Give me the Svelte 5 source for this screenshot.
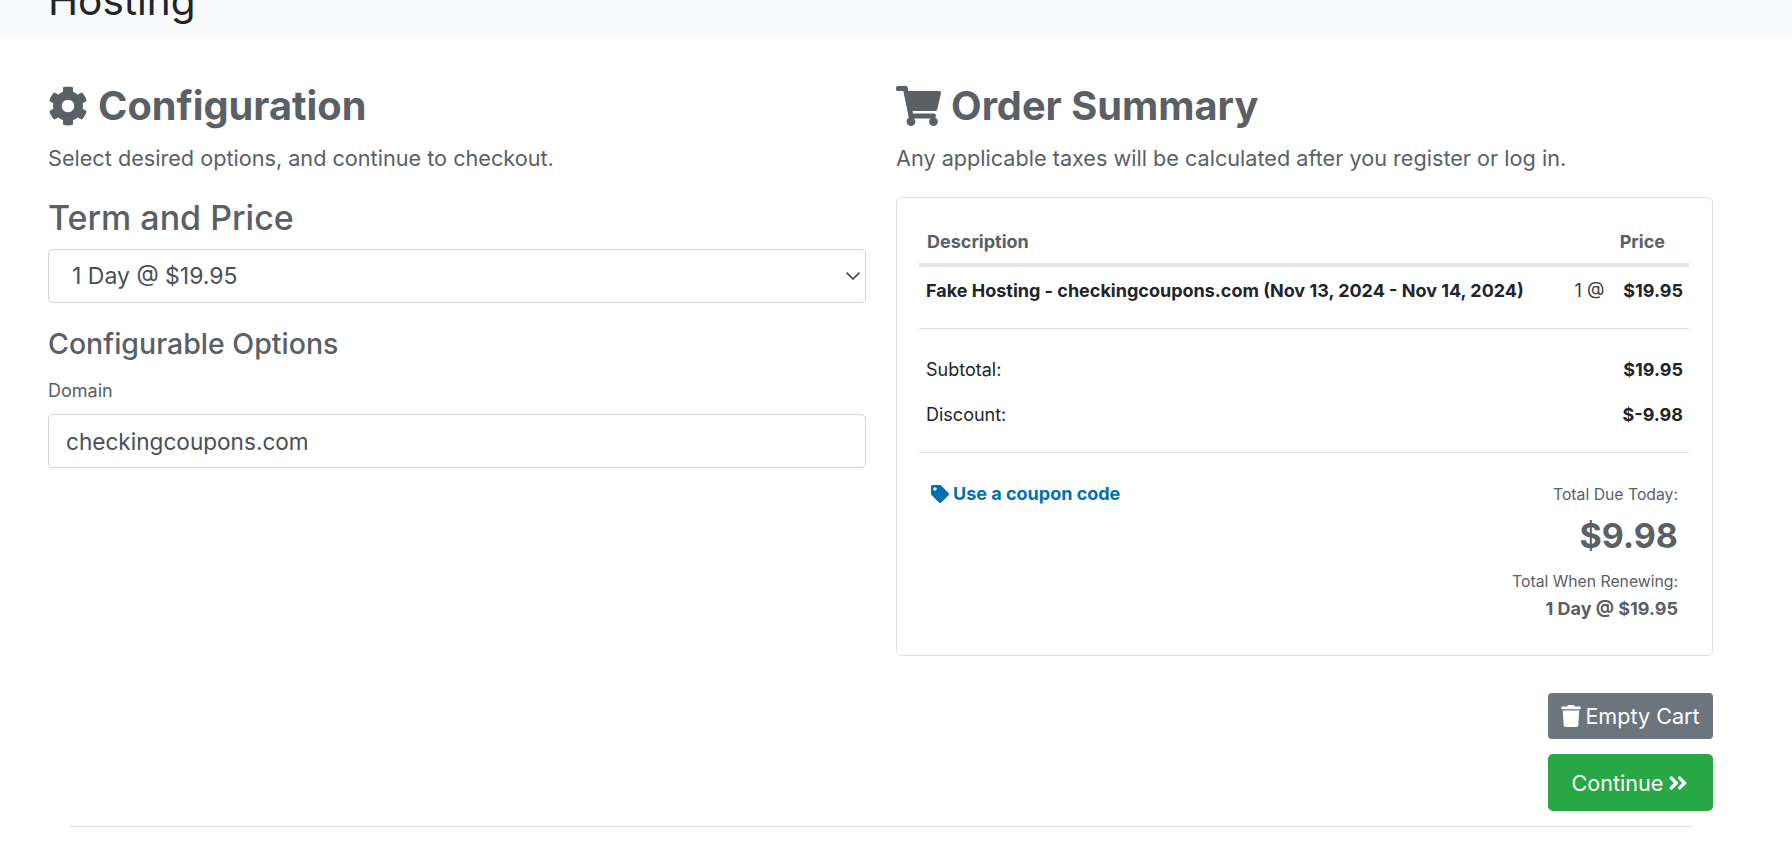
<script lang="ts">
  let term = $state('1 Day @ $19.95');
  let domain = $state('checkingcoupons.com');
</script>

<header class="band">
  <h1>Hosting</h1>
</header>

<main class="page">
  <section class="config">
    <h2>
      <svg class="ico gear" viewBox="0 0 512 512" aria-hidden="true"><path d="M487.4 315.7l-42.6-24.6c4.3-23.2 4.3-47 0-70.2l42.6-24.6c4.9-2.8 7.1-8.6 5.5-14-11.1-35.6-30-67.8-54.7-94.6-3.8-4.1-10-5.1-14.8-2.3L380.8 110c-17.9-15.4-38.5-27.3-60.8-35.1V25.8c0-5.6-3.9-10.5-9.4-11.7-36.7-8.2-74.3-7.8-109.2 0-5.5 1.2-9.4 6.1-9.4 11.7V75c-22.2 7.9-42.8 19.8-60.8 35.1L88.7 85.5c-4.9-2.8-11-1.9-14.8 2.3-24.7 26.7-43.6 58.9-54.7 94.6-1.7 5.4.6 11.2 5.5 14L67.3 221c-4.3 23.2-4.3 47 0 70.2l-42.6 24.6c-4.9 2.8-7.1 8.6-5.5 14 11.1 35.6 30 67.8 54.7 94.6 3.8 4.1 10 5.1 14.8 2.3l42.6-24.6c17.9 15.4 38.5 27.3 60.8 35.1v49.2c0 5.6 3.9 10.5 9.4 11.7 36.7 8.2 74.3 7.8 109.2 0 5.5-1.2 9.4-6.1 9.4-11.7v-49.2c22.2-7.9 42.8-19.8 60.8-35.1l42.6 24.6c4.9 2.8 11 1.9 14.8-2.3 24.7-26.7 43.6-58.9 54.7-94.6 1.5-5.5-.7-11.3-5.6-14.1zM256 336c-44.1 0-80-35.9-80-80s35.9-80 80-80 80 35.9 80 80-35.9 80-80 80z"/></svg>
      Configuration
    </h2>
    <p class="lead">Select desired options, and continue to checkout.</p>
    <h3>Term and Price</h3>
    <div class="select-wrap">
      <select bind:value={term}>
        <option>1 Day @ $19.95</option>
      </select>
      <svg class="chev" viewBox="0 0 16 16" aria-hidden="true"><path fill="none" stroke="#343a40" stroke-linecap="round" stroke-linejoin="round" stroke-width="1.6" d="M2 5l6 6 6-6"/></svg>
    </div>
    <h4>Configurable Options</h4>
    <label for="domain">Domain</label>
    <input id="domain" type="text" bind:value={domain} />
  </section>

  <section class="summary">
    <h2>
      <svg class="ico cart" viewBox="0 0 576 512" aria-hidden="true"><path d="M528.12 301.319l47.273-208C578.806 78.301 567.391 64 551.99 64H159.208l-9.166-44.81C147.758 8.021 137.93 0 126.529 0H24C10.745 0 0 10.745 0 24v16c0 13.255 10.745 24 24 24h69.883l70.248 343.435C147.325 417.1 136 435.222 136 456c0 30.928 25.072 56 56 56s56-25.072 56-56c0-15.674-6.447-29.835-16.824-40h209.647C430.447 426.165 424 440.326 424 456c0 30.928 25.072 56 56 56s56-25.072 56-56c0-22.172-12.888-41.332-31.579-50.405l5.517-24.276c3.413-15.018-8.002-29.319-23.403-29.319H218.117l-6.545-32h293.145c11.206 0 20.92-7.754 23.403-18.681z"/></svg>
      Order Summary
    </h2>
    <p class="lead">Any applicable taxes will be calculated after you register or log in.</p>

    <div class="card">
      <div class="thead">
        <span>Description</span>
        <span class="th-price">Price</span>
      </div>
      <div class="item">
        <strong>Fake Hosting - checkingcoupons.com (Nov 13, 2024 - Nov 14, 2024)</strong>
        <span class="qty">1 @</span>
        <strong>$19.95</strong>
      </div>
      <div class="totals">
        <div class="line"><span>Subtotal:</span><strong>$19.95</strong></div>
        <div class="line"><span>Discount:</span><strong>$-9.98</strong></div>
      </div>
      <div class="foot">
        <a class="coupon" href="#coupon">
          <svg class="tag" viewBox="0 0 512 512" aria-hidden="true"><path d="M0 252.118V48C0 21.49 21.49 0 48 0h204.118a48 48 0 0 1 33.941 14.059l211.882 211.882c18.745 18.745 18.745 49.137 0 67.882L293.823 497.941c-18.745 18.745-49.137 18.745-67.882 0L14.059 286.059A48 48 0 0 1 0 252.118zM112 64c-26.51 0-48 21.49-48 48s21.49 48 48 48 48-21.49 48-48-21.49-48-48-48z"/></svg>
          Use a coupon code
        </a>
        <div class="due">
          <div class="small">Total Due Today:</div>
          <div class="amount">$9.98</div>
          <div class="small renew">Total When Renewing:</div>
          <div class="cycle">1 Day @ $19.95</div>
        </div>
      </div>
    </div>

    <div class="actions">
      <button class="btn empty" type="button">
        <svg class="trash" viewBox="0 0 448 512" aria-hidden="true"><path d="M432 32H312l-9.4-18.7A24 24 0 0 0 281.1 0H166.8a23.72 23.72 0 0 0-21.4 13.3L136 32H16A16 16 0 0 0 0 48v32a16 16 0 0 0 16 16h416a16 16 0 0 0 16-16V48a16 16 0 0 0-16-16zM53.2 467a48 48 0 0 0 47.9 45h245.8a48 48 0 0 0 47.9-45L416 128H32z"/></svg>
        Empty Cart
      </button>
      <button class="btn go" type="button">
        Continue
        <svg class="dbl" viewBox="0 0 448 512" aria-hidden="true"><path d="M224.3 273l-136 136c-9.4 9.4-24.6 9.4-33.9 0l-22.6-22.6c-9.4-9.4-9.4-24.6 0-33.9l96.4-96.4-96.4-96.4c-9.4-9.4-9.4-24.6 0-33.9L54.3 103c9.4-9.4 24.6-9.4 33.9 0l136 136c9.5 9.4 9.5 24.6.1 34zm192-34l-136-136c-9.4-9.4-24.6-9.4-33.9 0l-22.6 22.6c-9.4 9.4-9.4 24.6 0 33.9l96.4 96.4-96.4 96.4c-9.4 9.4-9.4 24.6 0 33.9l22.6 22.6c9.4 9.4 24.6 9.4 33.9 0l136-136c9.4-9.2 9.4-24.4 0-33.8z"/></svg>
      </button>
    </div>
  </section>
</main>
<hr />

<style>
  :global(body) {
    margin: 0;
    background: #fff;
    color: #212529;
    font-family: Inter, "Liberation Sans", sans-serif;
    overflow: hidden;
  }

  .band {
    height: 37px;
    background: #f8f9fa;
    overflow: hidden;
    display: flex;
    align-items: flex-end;
    padding-left: 48px;
  }

  h1 {
    margin: 0 0 12px;
    font-size: 40.5px;
    font-weight: 400;
    line-height: 48px;
    color: #212529;
  }

  .page {
    display: grid;
    grid-template-columns: 818px 817px;
    column-gap: 30px;
    padding: 45px 0 0 48px;
  }

  h2 {
    margin: 0;
    font-size: 39.75px;
    line-height: 48px;
    font-weight: 700;
    color: #5a6066;
    display: flex;
    align-items: center;
    gap: 10px;
  }

  .ico {
    fill: #5a6066;
    height: 40px;
    flex-shrink: 0;
  }

  .gear { width: 40px; }
  .cart { width: 45px; }

  .lead {
    margin: 12px 0 0;
    font-size: 21.65px;
    line-height: 32px;
    color: #5a6066;
  }

  h3 {
    margin: 24px 0 0;
    font-size: 34px;
    line-height: 40px;
    font-weight: 500;
    color: #5a6066;
  }

  .select-wrap {
    position: relative;
    margin-top: 11px;
  }

  select, input {
    display: block;
    box-sizing: border-box;
    width: 100%;
    height: 54px;
    border: 1px solid #ced4da;
    border-radius: 5px;
    background: #fff;
    color: #495057;
    font: 400 22.6px Inter, sans-serif;
    outline: none;
  }

  select {
    appearance: none;
    padding: 0 40px 0 23px;
    font-size: 23px;
  }

  input {
    padding: 0 17px;
  }

  .chev {
    position: absolute;
    right: 5px;
    top: 19px;
    width: 16px;
    height: 16px;
  }

  h4 {
    margin: 24px 0 0;
    font-size: 28.5px;
    line-height: 34px;
    font-weight: 500;
    color: #5a6066;
  }

  label {
    display: block;
    margin: 16px 0 10px;
    font-size: 18px;
    line-height: 27px;
    color: #5a6066;
  }

  .card {
    box-sizing: border-box;
    height: 459px;
    margin-top: 23px;
    border: 1px solid #dee2e6;
    border-radius: 5px;
    padding: 22px 23px 22px 22px;
    font-size: 18px;
    color: #212529;
  }

  .thead {
    display: flex;
    justify-content: space-between;
    padding: 8px 24px 8px 8px;
    line-height: 27px;
    font-weight: 700;
    color: #5a6066;
    border-bottom: 4px solid #e3e3e3;
  }

  .item {
    display: flex;
    align-items: center;
    gap: 19px;
    padding: 10px 6px 24px 7px;
    line-height: 27px;
    border-bottom: 1px solid #dee2e6;
  }

  .item strong:first-child {
    flex: 1;
  }

  .qty { color: #343a40; }

  .totals {
    padding: 27px 6px 7px 7px;
    border-bottom: 1px solid #dee2e6;
  }

  .line {
    display: flex;
    justify-content: space-between;
    line-height: 27px;
    padding-bottom: 18px;
  }

  .line:last-child {
    padding-bottom: 17px;
  }

  .foot {
    display: flex;
    justify-content: space-between;
    padding: 27px 11px 0 12px;
  }

  .coupon {
    display: flex;
    align-items: center;
    align-self: flex-start;
    gap: 4px;
    color: #006fb3;
    font-weight: 700;
    line-height: 27px;
    text-decoration: none;
  }

  .tag {
    width: 18px;
    height: 18px;
    fill: #006fb3;
  }

  .due {
    text-align: right;
    color: #5a6066;
    padding-top: 3px;
  }

  .small {
    font-size: 15.75px;
    line-height: 24px;
  }

  .amount {
    font-size: 34px;
    line-height: 44px;
    font-weight: 700;
    margin-top: 7px;
  }

  .renew { margin-top: 12px; }

  .cycle {
    font-size: 18px;
    line-height: 27px;
    font-weight: 700;
    margin-top: 1px;
  }

  .actions {
    display: flex;
    flex-direction: column;
    align-items: flex-end;
    margin-top: 37px;
    gap: 15px;
  }

  .btn {
    box-sizing: border-box;
    width: 165px;
    border: none;
    color: #fff;
    font: 400 21.6px Inter, sans-serif;
    display: flex;
    align-items: center;
    justify-content: center;
    gap: 4px;
  }

  .empty {
    height: 46px;
    background: #6c757d;
    border-radius: 4px;
  }

  .go {
    height: 57px;
    background: #28a745;
    border-radius: 5px;
  }

  .trash {
    width: 20px;
    height: 22px;
    fill: #fff;
  }

  .dbl {
    width: 22px;
    height: 22px;
    fill: #fff;
  }

  hr {
    margin: 15px 100px 0 70px;
    border: none;
    border-top: 1px solid #dfe1e3;
  }
</style>
